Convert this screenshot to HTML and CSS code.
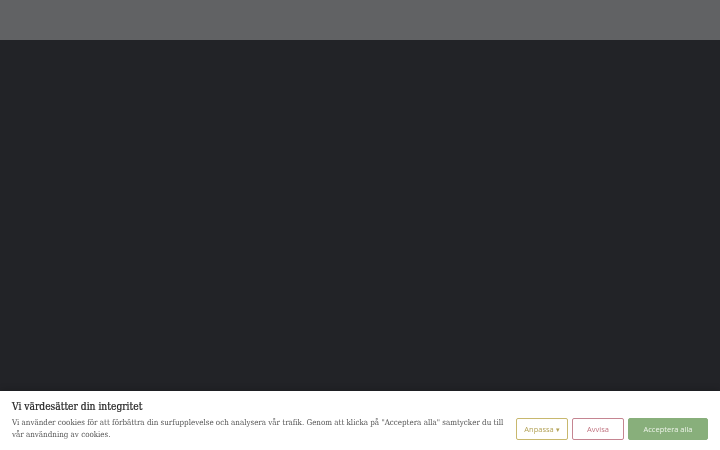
FILE: index.html
```html
<!DOCTYPE html>
<html lang="sv">
<head>
    <meta charset="UTF-8">
    <meta name="viewport" content="width=device-width, initial-scale=1.0">
    <title>Vi värdesätter din integritet</title>
    <link rel="stylesheet" href="styles.css">
</head>
<body>
    <header class="topbar"></header>
    <main class="page"></main>

    <div class="cookie-banner">
        <div class="cookie-text">
            <h2>Vi värdesätter din integritet</h2>
            <p>Vi använder cookies för att förbättra din surfupplevelse och analysera vår trafik. Genom att klicka på "Acceptera alla" samtycker du till vår användning av cookies.</p>
        </div>
        <div class="cookie-buttons">
            <button class="btn btn-customize">Anpassa <span class="caret">&#9662;</span></button>
            <button class="btn btn-reject">Avvisa</button>
            <button class="btn btn-accept">Acceptera alla</button>
        </div>
    </div>
</body>
</html>
```

FILE: styles.css
```css
* {
    margin: 0;
    padding: 0;
    box-sizing: border-box;
}

html, body {
    height: 100%;
}

body {
    font-family: "DejaVu Serif", "Liberation Serif", serif;
    font-stretch: condensed;
    background-color: #222327;
    display: flex;
    flex-direction: column;
}

.topbar {
    height: 40px;
    background-color: #616264;
    flex: 0 0 auto;
}

.page {
    flex: 1;
    background-color: #222327;
}

.cookie-banner {
    position: fixed;
    left: 0;
    right: 0;
    bottom: 0;
    height: 59px;
    background-color: #fff;
    display: flex;
    align-items: center;
    gap: 12px;
    padding: 0 12px;
    box-shadow: 0 -2px 6px rgba(0, 0, 0, 0.15);
}

.cookie-text {
    flex: 1;
    color: #333;
}

.cookie-text h2 {
    font-size: 10.2px;
    font-weight: normal;
    color: #1d1d1d;
    margin-bottom: 5px;
    -webkit-text-stroke: 0.2px #1d1d1d;
}

.cookie-text p {
    font-size: 7.95px;
    line-height: 12px;
    color: #555;
}

.cookie-buttons {
    display: flex;
    gap: 4px;
    margin-top: 16px;
}

.btn {
    font-family: "Open Sans", "Noto Sans", sans-serif;
    font-stretch: normal;
    font-size: 7.5px;
    height: 22px;
    background: #fff;
    border: 1.5px solid;
    border-radius: 2px;
    cursor: pointer;
}

.btn-customize {
    width: 52px;
    color: #b3a257;
    border-color: #c8b86e;
}

.caret {
    font-size: 7px;
}

.btn-reject {
    width: 52px;
    color: #c07480;
    border-color: #c58591;
}

.btn-accept {
    width: 80px;
    color: #eef4ea;
    background-color: #88af7b;
    border-color: #88af7b;
}
```
